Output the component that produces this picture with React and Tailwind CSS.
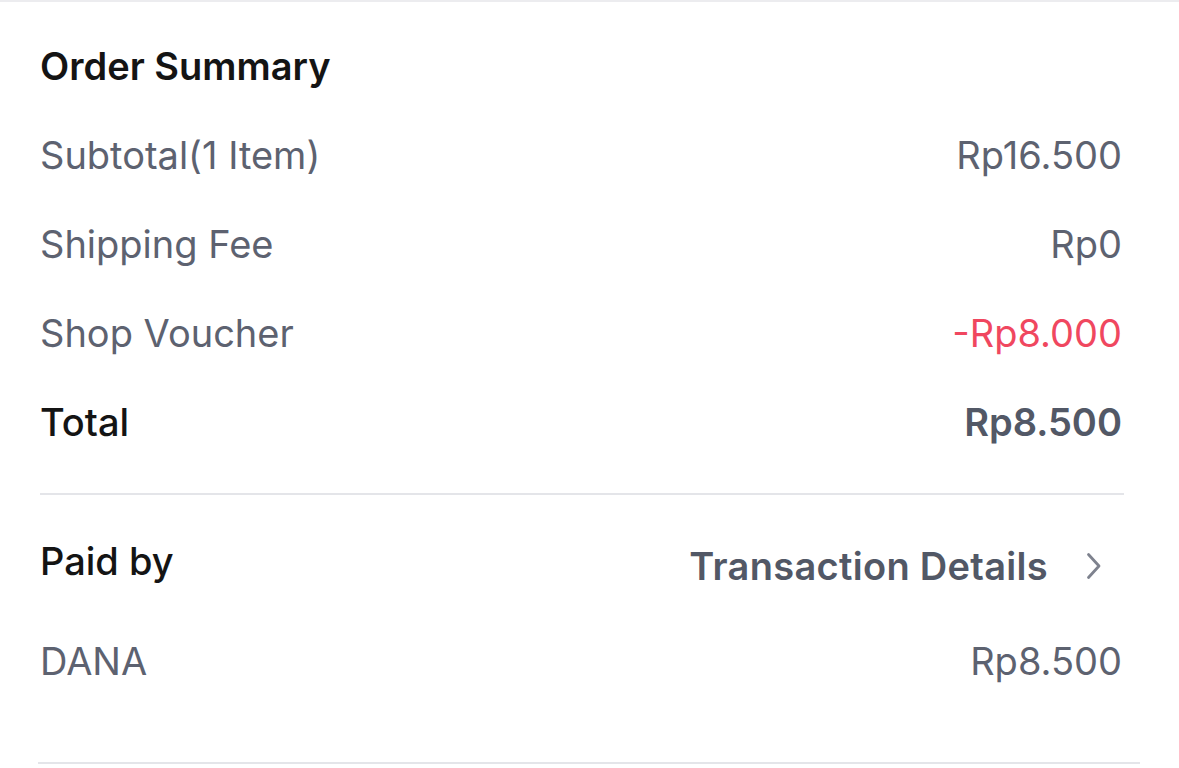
export default function App() {
  const font = { fontFamily: "Inter, 'Noto Sans', sans-serif" };
  return (
    <div className="w-[1179px] h-[768px] bg-white overflow-hidden" style={font}>
      <div className="h-[2px] bg-[#ececef]" />
      <div className="pl-[40px] pr-[55px] pt-[20px]">
        <div className="h-[89px] flex items-center text-[38px] font-semibold text-[#141414]">
          Order Summary
        </div>
        <Row label="Subtotal(1 Item)" value="Rp16.500" />
        <Row label="Shipping Fee" value="Rp0" />
        <Row label="Shop Voucher" value="-Rp8.000" valueClass="text-[#f0475f]" />
        <div className="h-[89px] flex items-center justify-between text-[38px]">
          <span className="font-medium text-[#141414]">Total</span>
          <span className="font-semibold text-[#525866] pr-[2px]">Rp8.500</span>
        </div>
        <div className="mt-[26px] h-[2px] bg-[#e4e5e9]" />
        <div className="mt-[16px] h-[100px] flex items-center justify-between text-[38px]">
          <span className="font-medium text-[#141414]">Paid by</span>
          <span className="flex items-center mt-[10px] text-[#525866] font-semibold tracking-[0.3px]">
            Transaction Details
            <svg className="ml-[38px] mr-[22px]" width="16" height="28" viewBox="0 0 16 28" fill="none">
              <path d="M2.5 2.5 L13 14 L2.5 25.5" stroke="#7e828e" strokeWidth="2.8" strokeLinecap="round" strokeLinejoin="round" />
            </svg>
          </span>
        </div>
        <Row label="DANA" value="Rp8.500" h="h-[100px]" />
      </div>
      <div className="ml-[38px] mr-[39px] mt-[51px] h-[2px] bg-[#e4e5e9]" />
    </div>
  );
}

function Row({ label, value, valueClass = "text-[#5d6270]", h = "h-[89px]" }) {
  return (
    <div className={`${h} flex items-center justify-between text-[38px]`}>
      <span className="text-[#5d6270]">{label}</span>
      <span className={`${valueClass} pr-[2px]`}>{value}</span>
    </div>
  );
}
